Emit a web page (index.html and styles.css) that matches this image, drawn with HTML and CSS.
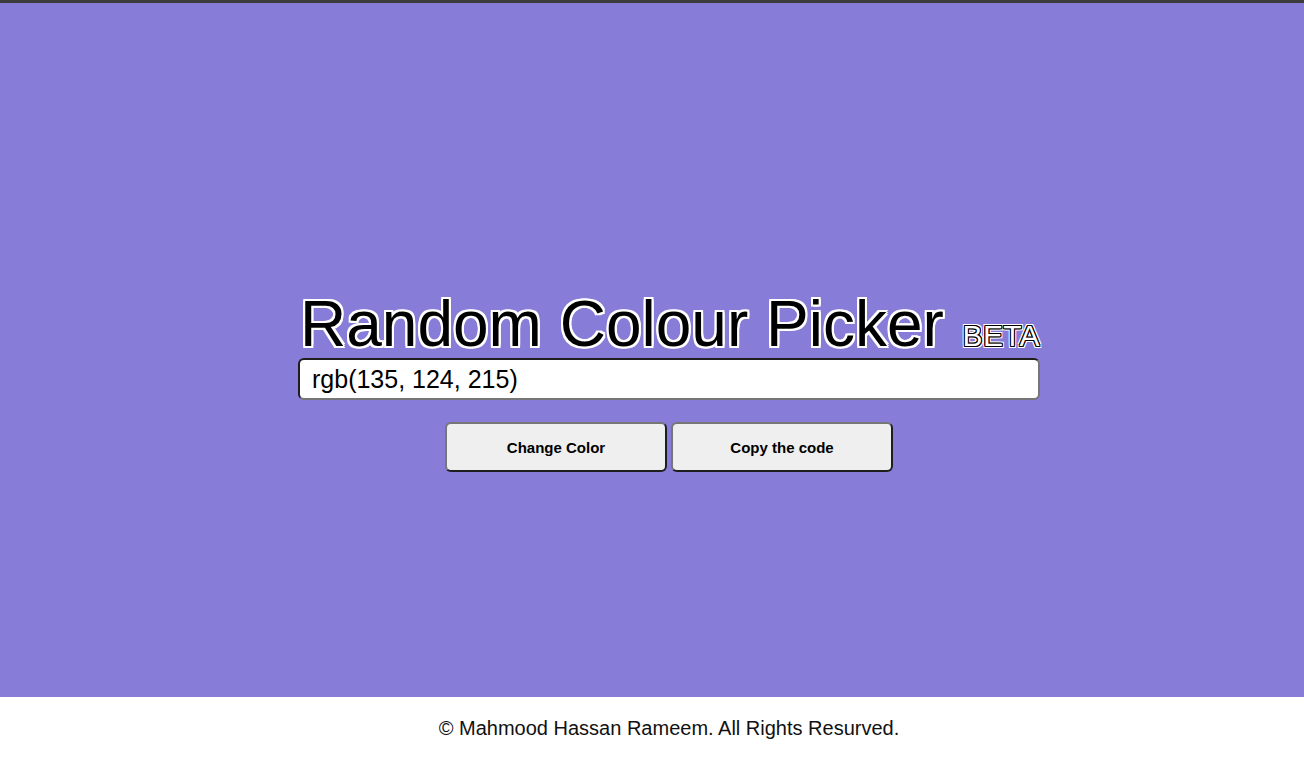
FILE: index.html
```html
<!DOCTYPE html>
<html lang="en">
<head>
<meta charset="utf-8">
<title>Random Colour Picker</title>
<link rel="stylesheet" href="styles.css">
</head>
<body>
<div class="topbar"></div>
<main class="stage">
  <div class="picker">
    <h1 class="title">Random Colour Picker <span class="beta">BETA</span></h1>
    <input class="code" type="text" value="rgb(135, 124, 215)" readonly>
    <div class="actions">
      <button class="btn">Change Color</button>
      <button class="btn">Copy the code</button>
    </div>
  </div>
</main>
<footer class="footer">© Mahmood Hassan Rameem. All Rights Resurved.</footer>
</body>
</html>
```
FILE: styles.css
```css
* { box-sizing: border-box; }
html, body { margin: 0; padding: 0; }
body {
  font-family: "Liberation Sans", Arial, sans-serif;
  background: #fff;
  height: 759px;
  overflow: hidden;
}
.topbar {
  height: 3px;
  background: #3c3c3c;
}
.stage {
  height: 694px;
  background: rgb(135, 124, 215);
  display: flex;
  justify-content: center;
  padding-top: 289px;
  padding-left: 34px;
}
.picker {
  width: 742px;
  display: flex;
  flex-direction: column;
  align-items: stretch;
}
.title {
  margin: 0 0 2px 2px;
  font-size: 64px;
  font-weight: normal;
  line-height: 64px;
  color: #000;
  white-space: nowrap;
  text-shadow:
    -2px -2px 0 #fff, 2px -2px 0 #fff, -2px 2px 0 #fff, 2px 2px 0 #fff,
    0 -2px 0 #fff, 0 2px 0 #fff, -2px 0 0 #fff, 2px 0 0 #fff;
}
.beta {
  font-size: 30px;
  line-height: 0;
  margin-left: 1px;
  letter-spacing: 0.3px;
  color: #fff;
  text-shadow:
    -1px -1px 0 #000, 1px -1px 0 #000, -1px 1px 0 #000, 1px 1px 0 #000,
    0 -1px 0 #000, 0 1px 0 #000, -1px 0 0 #000, 1px 0 0 #000,
    -2px -2px 0 #fff, 2px -2px 0 #fff, -2px 2px 0 #fff, 2px 2px 0 #fff,
    0 -2px 0 #fff, 0 2px 0 #fff, -2px 0 0 #fff, 2px 0 0 #fff;
}
.code {
  height: 42px;
  width: 742px;
  border: 2px solid;
  border-color: #1e1e1e #767676 #767676 #1e1e1e;
  border-radius: 6px;
  background: #fff;
  padding: 0 12px;
  font-family: "Liberation Sans", Arial, sans-serif;
  font-size: 25px;
  color: #000;
  outline: none;
}
.actions {
  display: flex;
  justify-content: center;
  gap: 4px;
  margin-top: 22px;
}
.btn {
  width: 222px;
  height: 50px;
  background: #efefef;
  border: 2px solid;
  border-color: #767676 #1e1e1e #1e1e1e #767676;
  border-radius: 6px;
  font-family: "Liberation Sans", Arial, sans-serif;
  font-size: 15px;
  font-weight: bold;
  color: #000;
  padding: 0;
}
.footer {
  height: 62px;
  display: flex;
  align-items: center;
  justify-content: center;
  font-size: 20px;
  color: #111;
  padding-left: 34px;
}
```
